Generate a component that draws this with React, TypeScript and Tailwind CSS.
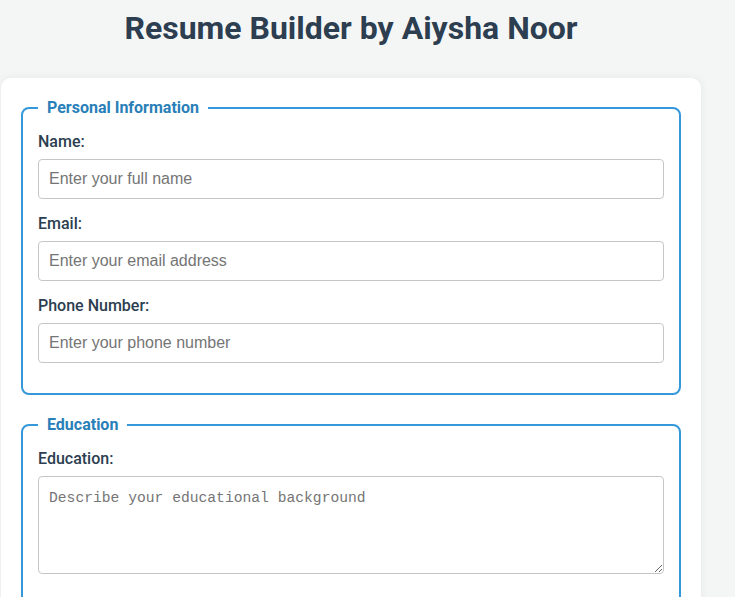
import { useState } from 'react';

const inputCls =
  "block w-full h-[40px] px-[10px] mb-[15px] border border-[#c4c7ca] rounded-[4px] text-[16px] text-[#2c3e50] placeholder:text-[#757575] outline-none font-['Liberation_Sans',Arial,sans-serif]";

const labelCls = 'block mb-2 text-[16px] leading-[19px] font-medium text-[#2c3e50]';

function Field({ label, placeholder, type = 'text' }: { label: string; placeholder: string; type?: string }) {
  const [value, setValue] = useState('');
  return (
    <div>
      <label className={labelCls}>{label}</label>
      <input
        type={type}
        value={value}
        onChange={(e) => setValue(e.target.value)}
        placeholder={placeholder}
        className={inputCls}
      />
    </div>
  );
}

function Section({ title, children }: { title: string; children: React.ReactNode }) {
  return (
    <fieldset className="border-2 border-[#3498db] rounded-lg px-[15px] pb-[15px] pt-[15px] mb-[20px]">
      <legend className="px-[9px] text-[16px] leading-[19px] font-bold text-[#2980b9]">{title}</legend>
      {children}
    </fieldset>
  );
}

export default function App() {
  const [education, setEducation] = useState('');

  return (
    <div className="min-h-[597px] bg-[#f4f6f6] font-[Roboto,sans-serif]">
      <div className="w-[700px] ml-px">
        <h1 className="pt-[9px] text-center text-[32px] leading-[38px] font-bold text-[#2c3e50]">
          Resume Builder by Aiysha Noor
        </h1>
        <form className="mt-[31px] bg-white rounded-[10px] shadow-[0_0_10px_rgba(0,0,0,0.06)] p-[20px]">
          <Section title="Personal Information">
            <Field label="Name:" placeholder="Enter your full name" />
            <Field label="Email:" placeholder="Enter your email address" type="email" />
            <Field label="Phone Number:" placeholder="Enter your phone number" type="tel" />
          </Section>
          <Section title="Education">
            <label className={labelCls}>Education:</label>
            <textarea
              value={education}
              onChange={(e) => setEducation(e.target.value)}
              placeholder="Describe your educational background"
              className="block w-full h-[98px] p-[10px] mb-[15px] border border-[#c4c7ca] rounded-[4px] text-[14.67px] text-[#2c3e50] placeholder:text-[#757575] outline-none font-['Liberation_Mono',monospace]"
            />
          </Section>
        </form>
      </div>
    </div>
  );
}
